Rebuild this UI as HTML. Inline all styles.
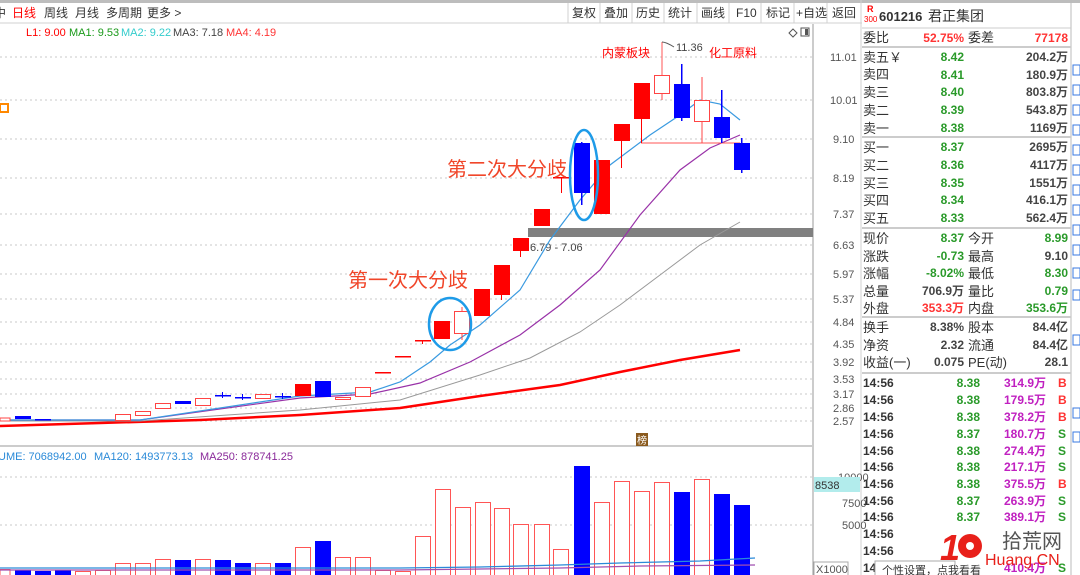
<!DOCTYPE html>
<html><head><meta charset="utf-8"><style>
*{margin:0;padding:0}
body{width:1080px;height:575px;overflow:hidden;background:#fff;font-family:"Liberation Sans","Noto Sans CJK SC",sans-serif;position:relative}
svg text{font-family:"Liberation Sans","Noto Sans CJK SC",sans-serif}
</style></head><body>
<svg width="1080" height="575" viewBox="0 0 1080 575" xmlns="http://www.w3.org/2000/svg" style="position:absolute;left:0;top:0">
<rect x="0" y="0" width="1080" height="3" fill="#bdbdbd"/>
<!-- toolbar -->
<line x1="0" y1="23" x2="862" y2="23" stroke="#d0d0d0"/>
<g font-size="12" fill="#333">
<text x="-6" y="17">中</text>
<text x="12" y="17" fill="#f00">日线</text>
<text x="44" y="17">周线</text>
<text x="75" y="17">月线</text>
<text x="106" y="17">多周期</text>
<text x="147" y="17">更多 &gt;</text>
<text x="572" y="17">复权</text><text x="604" y="17">叠加</text><text x="636" y="17">历史</text><text x="668" y="17">统计</text><text x="701" y="17">画线</text><text x="736" y="17">F10</text><text x="766" y="17">标记</text><text x="796" y="17">+自选</text><text x="832" y="17">返回</text>
</g>
<g stroke="#d0d0d0"><line x1="568" y1="3" x2="568" y2="23"/><line x1="600" y1="3" x2="600" y2="23"/><line x1="632" y1="3" x2="632" y2="23"/><line x1="664" y1="3" x2="664" y2="23"/><line x1="697" y1="3" x2="697" y2="23"/><line x1="729" y1="3" x2="729" y2="23"/><line x1="761" y1="3" x2="761" y2="23"/><line x1="794" y1="3" x2="794" y2="23"/><line x1="827" y1="3" x2="827" y2="23"/><line x1="861" y1="0" x2="861" y2="575"/></g>
<!-- legend -->
<g font-size="11"><text x="26" y="36" fill="#f00">L1: 9.00</text><text x="69" y="36" fill="#1a9a1a">MA1: 9.53</text><text x="121" y="36" fill="#3cc">MA2: 9.22</text><text x="173" y="36" fill="#444">MA3: 7.18</text><text x="226" y="36" fill="#f33">MA4: 4.19</text></g>
<path d="M793 29l4 4-4 4-4-4z" fill="none" stroke="#555"/><rect x="801" y="28" width="8" height="8" fill="none" stroke="#555"/><rect x="805" y="29" width="3" height="6" fill="#555"/>
<!-- axis -->
<line x1="813" y1="24" x2="813" y2="575" stroke="#999"/>
<g stroke="#c8c8c8" stroke-dasharray="2,3">
<line x1="0" y1="57" x2="813" y2="57"/><line x1="0" y1="100" x2="813" y2="100"/><line x1="0" y1="139" x2="813" y2="139"/><line x1="0" y1="178" x2="813" y2="178"/><line x1="0" y1="214" x2="813" y2="214"/><line x1="0" y1="245" x2="813" y2="245"/><line x1="0" y1="274" x2="813" y2="274"/><line x1="0" y1="299" x2="813" y2="299"/><line x1="0" y1="322" x2="813" y2="322"/><line x1="0" y1="344" x2="813" y2="344"/><line x1="0" y1="362" x2="813" y2="362"/><line x1="0" y1="379" x2="813" y2="379"/><line x1="0" y1="394" x2="813" y2="394"/><line x1="0" y1="408" x2="813" y2="408"/><line x1="0" y1="421" x2="813" y2="421"/>
<line x1="0" y1="477" x2="813" y2="477"/><line x1="0" y1="525" x2="813" y2="525"/>
</g>
<g font-size="11" fill="#555"><text x="830" y="61">11.01</text><text x="830" y="104">10.01</text><text x="833" y="143">9.10</text><text x="833" y="182">8.19</text><text x="833" y="218">7.37</text><text x="833" y="249">6.63</text><text x="833" y="278">5.97</text><text x="833" y="303">5.37</text><text x="833" y="326">4.84</text><text x="833" y="348">4.35</text><text x="833" y="366">3.92</text><text x="833" y="383">3.53</text><text x="833" y="398">3.17</text><text x="833" y="412">2.86</text><text x="833" y="425">2.57</text>
<text x="838" y="481">10000</text><text x="842" y="507">7500</text><text x="842" y="529">5000</text></g>
<rect x="814" y="477" width="46" height="15" fill="#b2ecec"/><text x="815" y="489" font-size="11" fill="#333">8538</text>
<rect x="814" y="562" width="34" height="14" fill="#fff" stroke="#aaa"/><text x="816" y="573" font-size="11" fill="#555">X1000</text>
<line x1="0" y1="446" x2="813" y2="446" stroke="#ccc" stroke-width="2"/>
<rect x="0" y="104" width="8" height="8" fill="none" stroke="#f80" stroke-width="2"/>
<rect x="636" y="433" width="12" height="13" fill="#8a5a1e"/><text x="637" y="444" font-size="10" fill="#fff">榜</text>
<!-- gray bar -->
<rect x="528" y="228" width="285" height="9" fill="#808080"/>
<text x="530" y="251" font-size="11" fill="#444">6.79 - 7.06</text>
<!-- lines -->
<polyline fill="none" stroke="#f00" stroke-width="2.5" points="0,426 100,423 200,420 300,415 400,408 480,396 560,385 620,372 680,360 740,350"/>
<polyline fill="none" stroke="#999" stroke-width="1" points="0,421 140,421 300,410 400,400 480,375 530,358 580,332 620,305 660,275 700,245 740,222"/>
<polyline fill="none" stroke="#9932a8" stroke-width="1.2" points="0,420 140,420 300,398 370,394 420,383 470,362 520,335 560,305 600,270 640,215 680,170 710,148 740,135"/>
<polyline fill="none" stroke="#3a9ae0" stroke-width="1.2" points="0,420 140,420 300,396 370,392 400,382 430,362 450,345 480,325 520,290 550,240 580,200 610,165 650,135 680,115 700,100 720,104 740,120"/>
<!-- red hline -->
<line x1="641" y1="143" x2="740" y2="143" stroke="#f55"/>
<line x1="662" y1="42" x2="662" y2="75" stroke="#f55"/>
<path d="M662 42q4 0 12 5" fill="none" stroke="#555"/>
<text x="676" y="51" font-size="11" fill="#444">11.36</text>
<text x="602" y="57" font-size="12" fill="#f00">内蒙板块</text>
<text x="709" y="57" font-size="12" fill="#f00">化工原料</text>
<!-- candles -->
<g stroke="#f44" fill="#fff">
<rect x="0" y="418" width="10" height="3"/><rect x="115.5" y="414.5" width="15" height="6"/><rect x="135.5" y="411.5" width="15" height="4"/><rect x="155.5" y="403.5" width="15" height="5"/><rect x="195.5" y="398.5" width="15" height="7"/><rect x="255.5" y="394.5" width="15" height="4"/><rect x="335.5" y="397.5" width="15" height="2"/><rect x="355.5" y="387.5" width="15" height="9"/>
<line x1="462" y1="307" x2="462" y2="340"/><rect x="454.5" y="311.5" width="15" height="22"/>
<line x1="662" y1="93" x2="662" y2="100"/><rect x="654.5" y="75.5" width="15" height="18"/>
<line x1="702" y1="77" x2="702" y2="143"/><rect x="694.5" y="100.5" width="15" height="21"/>
</g>
<g fill="#f00">
<rect x="375" y="372" width="16" height="1.5"/><rect x="395" y="356" width="16" height="1.5"/><rect x="415" y="340" width="16" height="1.5"/><rect x="422" y="340" width="1" height="4"/>
<rect x="295" y="384" width="16" height="12"/>
<rect x="434" y="321" width="16" height="18"/>
<rect x="474" y="289" width="16" height="27"/>
<rect x="494" y="265" width="16" height="30"/><rect x="501" y="295" width="1" height="5"/>
<rect x="513" y="238" width="16" height="13"/><rect x="520" y="251" width="1" height="6"/>
<rect x="534" y="209" width="16" height="17"/>
<rect x="553" y="177" width="16" height="1.5"/><rect x="561" y="177" width="1" height="16"/>
<rect x="594" y="160" width="16" height="54"/>
<rect x="614" y="124" width="16" height="17"/><rect x="621" y="141" width="1" height="27"/>
<rect x="634" y="83" width="16" height="36"/><rect x="641" y="119" width="1" height="24"/>
</g>
<g fill="#00f">
<rect x="15" y="416" width="16" height="3"/><rect x="35" y="419" width="16" height="1.5"/><rect x="175" y="401" width="16" height="3"/>
<rect x="215" y="395" width="16" height="1.5"/><rect x="222" y="392" width="1" height="6"/>
<rect x="235" y="397" width="16" height="1.5"/><rect x="242" y="394" width="1" height="6"/>
<rect x="275" y="396" width="16" height="1.5"/><rect x="282" y="393" width="1" height="6"/>
<rect x="315" y="381" width="16" height="16"/>
<rect x="581" y="142" width="1.5" height="63"/><rect x="574" y="143" width="16" height="50"/>
<rect x="681" y="64" width="1.5" height="57"/><rect x="674" y="84" width="16" height="34"/>
<rect x="721" y="90" width="1.5" height="53"/><rect x="714" y="117" width="16" height="21"/>
<rect x="741" y="138" width="1.5" height="35"/><rect x="734" y="143" width="16" height="27"/>
</g>
<!-- circles -->
<ellipse cx="450" cy="324" rx="21" ry="26" fill="none" stroke="#1e9be8" stroke-width="2.5"/>
<ellipse cx="584" cy="175" rx="14" ry="45" fill="none" stroke="#1e9be8" stroke-width="2.5"/>
<text x="447" y="176" font-size="20" fill="#f0462a">第二次大分歧</text>
<text x="348" y="287" font-size="20" fill="#f0462a">第一次大分歧</text>
<!-- volume legend -->
<g font-size="11"><text x="-2" y="460" fill="#2a8ad8">UME: 7068942.00</text><text x="94" y="460" fill="#2a8ad8">MA120: 1493773.13</text><text x="200" y="460" fill="#8a2a9a">MA250: 878741.25</text></g>
<!-- volume bars -->
<g stroke="#f55" fill="#fff">
<rect x="0" y="569.5" width="10" height="6"/><rect x="75.5" y="571.5" width="15" height="4"/><rect x="95.5" y="570.5" width="15" height="5"/><rect x="115.5" y="563.5" width="15" height="12"/><rect x="135.5" y="563.5" width="15" height="12"/><rect x="155.5" y="559.5" width="15" height="16"/><rect x="195.5" y="559.5" width="15" height="16"/><rect x="255.5" y="563.5" width="15" height="12"/><rect x="295.5" y="547.5" width="15" height="28"/><rect x="335.5" y="557.5" width="15" height="18"/><rect x="355.5" y="557.5" width="15" height="18"/><rect x="375.5" y="570.5" width="15" height="5"/><rect x="395.5" y="571.5" width="15" height="4"/><rect x="415.5" y="536.5" width="15" height="39"/><rect x="435.5" y="489.5" width="15" height="86"/><rect x="455.5" y="507.5" width="15" height="68"/><rect x="475.5" y="502.5" width="15" height="73"/><rect x="494.5" y="508.5" width="15" height="67"/><rect x="513.5" y="524.5" width="15" height="51"/><rect x="534.5" y="524.5" width="15" height="51"/><rect x="553.5" y="549.5" width="15" height="26"/><rect x="594.5" y="502.5" width="15" height="73"/><rect x="614.5" y="481.5" width="15" height="94"/><rect x="634.5" y="491.5" width="15" height="84"/><rect x="654.5" y="482.5" width="15" height="93"/><rect x="694.5" y="479.5" width="15" height="96"/>
</g>
<g fill="#00f">
<rect x="15" y="570" width="16" height="5"/><rect x="35" y="571" width="16" height="4"/><rect x="55" y="570" width="16" height="5"/><rect x="175" y="560" width="16" height="15"/><rect x="215" y="560" width="16" height="15"/><rect x="235" y="563" width="16" height="12"/><rect x="275" y="563" width="16" height="12"/><rect x="315" y="541" width="16" height="34"/><rect x="574" y="466" width="16" height="109"/><rect x="674" y="492" width="16" height="83"/><rect x="714" y="494" width="16" height="81"/><rect x="734" y="505" width="16" height="70"/>
</g>
<polyline fill="none" stroke="#2a8ad8" stroke-width="1.3" points="0,568 400,568 480,567 560,565 620,563 700,561 755,558"/>
<polyline fill="none" stroke="#a050b0" stroke-width="1.3" points="0,570 400,570 480,569 560,568 640,566 755,565"/>
<!-- right panel -->
<line x1="1071" y1="0" x2="1071" y2="575" stroke="#bbb"/>
<line x1="862" y1="28" x2="1071" y2="28" stroke="#ccc"/>
<text x="867" y="12" font-size="9" fill="#f00" font-weight="bold">R</text><text x="864" y="22" font-size="8" fill="#f00">300</text>
<text x="879" y="21" font-size="13" font-weight="bold" fill="#333">601216</text><text x="928" y="21" font-size="14" fill="#333">君正集团</text>
<g stroke="#ccc" stroke-width="2"><line x1="862" y1="47" x2="1071" y2="47"/><line x1="862" y1="137" x2="1071" y2="137"/><line x1="862" y1="228" x2="1071" y2="228"/><line x1="862" y1="317" x2="1071" y2="317"/><line x1="862" y1="373" x2="1071" y2="373"/></g>
<g font-size="13" fill="#333">
<text x="863" y="42">委比</text><text x="968" y="42">委差</text>
<text x="863" y="62">卖五￥</text><text x="863" y="79">卖四</text><text x="863" y="97">卖三</text><text x="863" y="115">卖二</text><text x="863" y="133">卖一</text>
<text x="863" y="152">买一</text><text x="863" y="170">买二</text><text x="863" y="188">买三</text><text x="863" y="205">买四</text><text x="863" y="223">买五</text>
<text x="863" y="243">现价</text><text x="968" y="243">今开</text><text x="863" y="261">涨跌</text><text x="968" y="261">最高</text><text x="863" y="278">涨幅</text><text x="968" y="278">最低</text><text x="863" y="296">总量</text><text x="968" y="296">量比</text><text x="863" y="313">外盘</text><text x="968" y="313">内盘</text>
<text x="863" y="332">换手</text><text x="968" y="332">股本</text><text x="863" y="350">净资</text><text x="968" y="350">流通</text><text x="863" y="367">收益(一)</text><text x="968" y="367">PE(动)</text>
</g>
<g font-size="12" font-weight="bold" text-anchor="end">
<text x="964" y="42" fill="#f33">52.75%</text><text x="1068" y="42" fill="#f33">77178</text>
<g fill="#2a9a2a"><text x="964" y="61">8.42</text><text x="964" y="79">8.41</text><text x="964" y="96">8.40</text><text x="964" y="114">8.39</text><text x="964" y="132">8.38</text><text x="964" y="151">8.37</text><text x="964" y="169">8.36</text><text x="964" y="187">8.35</text><text x="964" y="204">8.34</text><text x="964" y="222">8.33</text>
<text x="964" y="242">8.37</text><text x="1068" y="242">8.99</text><text x="964" y="260">-0.73</text><text x="964" y="277">-8.02%</text><text x="1068" y="277">8.30</text><text x="1068" y="295">0.79</text><text x="1068" y="312">353.6万</text></g>
<g fill="#444"><text x="1068" y="61">204.2万</text><text x="1068" y="79">180.9万</text><text x="1068" y="96">803.8万</text><text x="1068" y="114">543.8万</text><text x="1068" y="132">1169万</text><text x="1068" y="151">2695万</text><text x="1068" y="169">4117万</text><text x="1068" y="187">1551万</text><text x="1068" y="204">416.1万</text><text x="1068" y="222">562.4万</text>
<text x="1068" y="260">9.10</text><text x="964" y="295">706.9万</text><text x="964" y="331">8.38%</text><text x="1068" y="331">84.4亿</text><text x="964" y="349">2.32</text><text x="1068" y="349">84.4亿</text><text x="964" y="366">0.075</text><text x="1068" y="366">28.1</text></g>
<text x="964" y="312" fill="#f33">353.3万</text>
</g>
<g font-size="12" font-weight="bold">
<g fill="#333"><text x="863" y="387">14:56</text><text x="863" y="404">14:56</text><text x="863" y="421">14:56</text><text x="863" y="438">14:56</text><text x="863" y="455">14:56</text><text x="863" y="471">14:56</text><text x="863" y="488">14:56</text><text x="863" y="505">14:56</text><text x="863" y="521">14:56</text><text x="863" y="538">14:56</text><text x="863" y="555">14:56</text><text x="863" y="572">14:56</text></g>
<g fill="#2a9a2a" text-anchor="end"><text x="980" y="387">8.38</text><text x="980" y="404">8.38</text><text x="980" y="421">8.38</text><text x="980" y="438">8.37</text><text x="980" y="455">8.38</text><text x="980" y="471">8.38</text><text x="980" y="488">8.38</text><text x="980" y="505">8.37</text><text x="980" y="521">8.37</text></g>
<g fill="#c020c0" text-anchor="end"><text x="1046" y="387">314.9万</text><text x="1046" y="404">179.5万</text><text x="1046" y="421">378.2万</text><text x="1046" y="438">180.7万</text><text x="1046" y="455">274.4万</text><text x="1046" y="471">217.1万</text><text x="1046" y="488">375.5万</text><text x="1046" y="505">263.9万</text><text x="1046" y="521">389.1万</text><text x="1046" y="572">410.4万</text></g>
<g><text x="1058" y="387" fill="#f33">B</text><text x="1058" y="404" fill="#f33">B</text><text x="1058" y="421" fill="#f33">B</text><text x="1058" y="438" fill="#2a9a2a">S</text><text x="1058" y="455" fill="#2a9a2a">S</text><text x="1058" y="471" fill="#2a9a2a">S</text><text x="1058" y="488" fill="#f33">B</text><text x="1058" y="505" fill="#2a9a2a">S</text><text x="1058" y="521" fill="#2a9a2a">S</text><text x="1058" y="572" fill="#2a9a2a">S</text></g>
</g>
<!-- watermark -->
<text x="940" y="560" font-size="36" font-weight="bold" fill="#e8201a" font-style="italic">1</text>
<circle cx="970" cy="546" r="12" fill="#e8201a"/><circle cx="970" cy="546" r="4" fill="#fff"/>
<text x="1002" y="548" font-size="20" fill="#555">拾荒网</text>
<text x="985" y="565" font-size="16" fill="#e8201a">Huang.CN</text>
<!-- tooltip -->
<rect x="875" y="561" width="80" height="16" fill="#fff" stroke="#aaa"/><text x="882" y="574" font-size="11" fill="#333">个性设置，点我看看</text>
<!-- icon strip -->
<g fill="none" stroke="#3a7ae0"><rect x="1073" y="65" width="7" height="10"/><rect x="1073" y="85" width="7" height="10"/><rect x="1073" y="105" width="7" height="10"/><rect x="1073" y="125" width="7" height="10"/><rect x="1073" y="145" width="7" height="10"/><rect x="1073" y="165" width="7" height="10"/><rect x="1073" y="185" width="7" height="10"/><rect x="1073" y="205" width="7" height="10"/><rect x="1073" y="225" width="7" height="10"/><rect x="1073" y="245" width="7" height="10"/><rect x="1073" y="268" width="7" height="10"/><rect x="1073" y="290" width="7" height="10"/><rect x="1073" y="335" width="7" height="10"/><rect x="1073" y="408" width="7" height="10"/><rect x="1073" y="432" width="7" height="10"/></g>
</svg>
</body></html>
